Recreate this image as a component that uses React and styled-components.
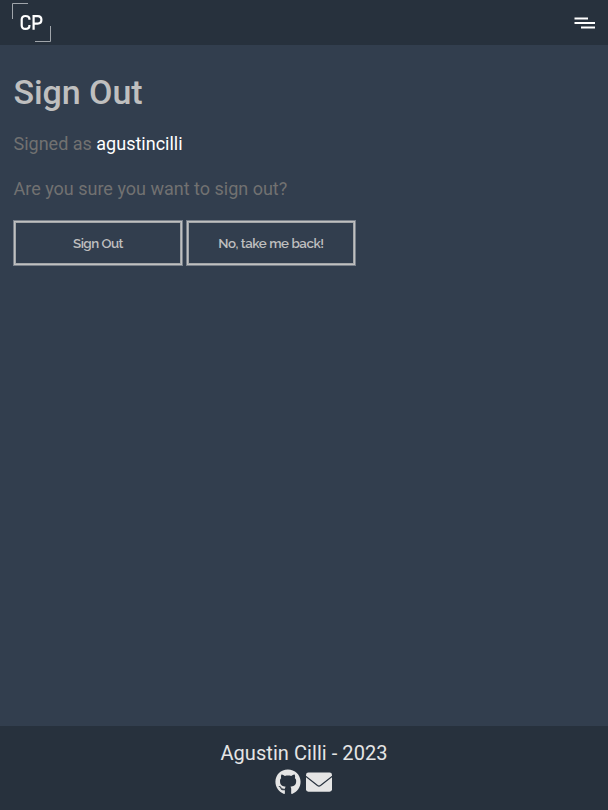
import React from 'react';
import styled, { createGlobalStyle } from 'styled-components';
import { FaGithub } from 'react-icons/fa';

const GlobalStyle = createGlobalStyle`
  * { box-sizing: border-box; }
  body {
    margin: 0;
    background: #323e4e;
    font-family: Roboto, "Liberation Sans", sans-serif;
  }
`;

const Page = styled.div`
  display: flex;
  flex-direction: column;
  height: 100vh;
  overflow: hidden;
`;

const Header = styled.header`
  display: flex;
  align-items: flex-start;
  justify-content: space-between;
  flex: none;
  height: 45px;
  padding: 0 13px 0 11px;
  background: #27313d;
`;

const Logo = styled.svg`
  display: block;
  width: 42px;
  height: 45px;
`;

const MenuButton = styled.button`
  display: block;
  margin: 16px 0 0;
  padding: 0;
  border: 0;
  background: none;
  line-height: 0;
`;

const Main = styled.main`
  flex: 1;
  padding: 27px 13px 0;
  color: #717171;
`;

const Title = styled.h1`
  margin: 0;
  padding-left: 0.5px;
  color: #bfbfbf;
  font-size: 34px;
  line-height: 40px;
  font-weight: 500;
  letter-spacing: -0.07px;
`;

const Text = styled.p`
  margin: ${({ $top }) => $top}px 0 0;
  padding-left: 0.5px;
  font-size: 18px;
  line-height: 24px;
`;

const Username = styled.span`
  color: #fff;
`;

const Actions = styled.div`
  display: flex;
  gap: 3px;
  margin-top: 19px;
`;

const ActionButton = styled.button`
  width: 170px;
  height: 46px;
  padding: 0;
  border: 1px solid #79808a;
  box-shadow: inset 0 0 0 1px #c0c0c0, inset 0 0 0 2px #a3a6a9;
  background: transparent;
  color: #bfbfbf;
  font: 600 13.33px Raleway, Lato, sans-serif;
  letter-spacing: ${({ $tracking }) => $tracking}px;
`;

const Footer = styled.footer`
  display: flex;
  flex-direction: column;
  align-items: center;
  flex: none;
  height: 84px;
  padding-top: 15px;
  background: #27313d;
  color: #e5e5e5;
  font-size: 20px;
  line-height: 24px;
`;

const Copyright = styled.span`
  letter-spacing: 0.06px;
`;

const Links = styled.div`
  display: flex;
  align-items: center;
  gap: 5px;
  height: 26px;
  margin: 3.5px 0.5px 0 0;
`;

function EnvelopeIcon() {
  return (
    <svg width="26" height="26" viewBox="0 0 26 26">
      <rect x="0" y="3.500" width="26" height="19.200" rx="2.400" fill="currentColor" />
      <path
        d="M-.5 7L11.500 16.500Q13 17.600 14.500 16.500L26.500 7"
        fill="none"
        stroke="#27313d"
        strokeWidth="1.200"
      />
    </svg>
  );
}

export default function App() {
  return (
    <Page>
      <GlobalStyle />
      <Header>
        <Logo viewBox="0 0 42 45" aria-label="CP">
          <path d="M17 3.500H1.500V19M24 41.500H39.500V26" fill="none" stroke="#a0a5ab" />
          <path
            d="M18.200 19.500V18.500Q18.200 15.800 14.200 15.800Q10.500 15.800 10.500 19.500V25Q10.500 28.700 14.200 28.700Q18.200 28.700 18.200 25.500V24.800M22.400 29.500V15.900H26.500Q30.200 15.900 30.200 19.600Q30.200 23.400 26.500 23.400H22.400"
            transform="translate(0.2 0.2)"
            fill="none"
            stroke="#fff"
            strokeWidth="2.200"
          />
        </Logo>
        <MenuButton aria-label="Menu">
          <svg width="21" height="14" viewBox="0 0 21 14">
            <path d="M.5 2.500H14M.5 7H21M7 11.500H21" stroke="#fff" strokeWidth="2.200" />
          </svg>
        </MenuButton>
      </Header>
      <Main>
        <Title>Sign Out</Title>
        <Text $top={20}>
          Signed as <Username>agustincilli</Username>
        </Text>
        <Text $top={21}>Are you sure you want to sign out?</Text>
        <Actions>
          <ActionButton $tracking={-0.5}>Sign Out</ActionButton>
          <ActionButton $tracking={-0.44}>No, take me back!</ActionButton>
        </Actions>
      </Main>
      <Footer>
        <Copyright>Agustin Cilli - 2023</Copyright>
        <Links>
          <FaGithub size={26} />
          <EnvelopeIcon />
        </Links>
      </Footer>
    </Page>
  );
}
